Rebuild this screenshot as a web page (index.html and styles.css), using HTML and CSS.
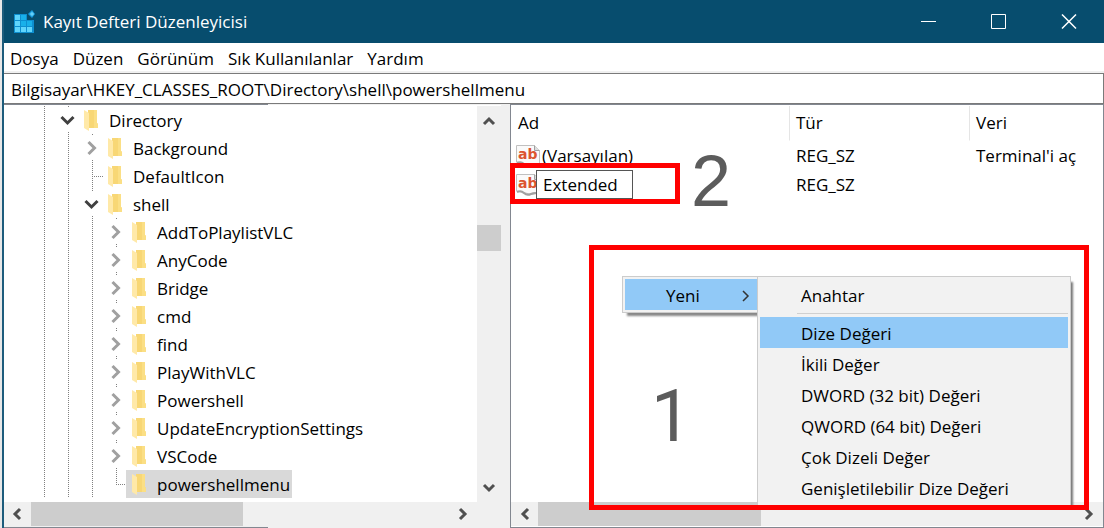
FILE: index.html
```html
<!DOCTYPE html>
<html lang="tr">
<head>
<meta charset="utf-8">
<title>Kayıt Defteri Düzenleyicisi</title>
<link rel="stylesheet" href="styles.css">
</head>
<body>
<svg class="defs" aria-hidden="true">
  <symbol id="folder" viewBox="0 0 14 22">
    <path d="M4 1h9v13l1 1v4H4z" fill="#f8d775"/>
    <path d="M10 1h3v13l1 1v4h-4z" fill="#fbdf85"/>
    <path d="M0 1l5 3v18l-5-3z" fill="#ffe9a8"/>
  </symbol>
  <symbol id="right" viewBox="0 0 24 28"><path d="M8.500 8l6 6-6 6" fill="none" stroke="#a0a0a0" stroke-width="3"/></symbol>
  <symbol id="down" viewBox="0 0 24 28"><path d="M5.500 11l6 6 6-6" fill="none" stroke="#404040" stroke-width="3"/></symbol>
  <symbol id="arrow" viewBox="0 0 24 24"><path d="M15 7l-5 5 5 5" fill="none" stroke="#505050" stroke-width="3"/></symbol>
  <symbol id="page" viewBox="0 0 24 24">
    <path d="M.5 1.500h18l5 5V21q-3-1-5 0t-5 0-5-1-4-1-4-1z" fill="#fafafa" stroke="#c0c0c0"/>
    <path d="M18.500 1.500v5h5" fill="#ddd" stroke="#a0a0a0"/>
    <path d="M1 19q4-2 7 1t7 1 9 0" fill="none" stroke="#a0a0a0" stroke-width="2"/>
  </symbol>
</svg>
<div class="window">
  <header class="titlebar">
    <svg class="app-icon" viewBox="0 0 24 24" aria-hidden="true">
      <path d="M1 4h13v6h7v13H1z" fill="#0d8fd0"/>
      <path d="M2 5h5v5H2zM2 11h5v5H2zM2 17h5v5H2zM8 17h5v5H8zM14 17h5v5h-5z" fill="#5fd4fb"/>
      <path d="M8 5h5v5H8zM8 11h5v5H8zM14 11h5v5h-5z" fill="#18b0ea"/>
      <path d="M19 0l3 4-3 4-4-4z" fill="#199ee0"/><path d="M19 2v4M17 4h4" stroke="#7edfff"/>
    </svg>
    <h1 class="title">Kayıt Defteri Düzenleyicisi</h1>
    <button class="control" aria-label="Simge durumuna küçült"><svg viewBox="0 0 16 16"><path d="M0 7.500h15"/></svg></button>
    <button class="control" aria-label="Ekranı kapla"><svg viewBox="0 0 16 16"><path d="M.5 .5h14v14H.5z"/></svg></button>
    <button class="control close" aria-label="Kapat"><svg viewBox="0 0 16 16"><path d="M1 .5l14 14M15 .5l-14 14"/></svg></button>
  </header>
  <nav class="menubar">
    <button>Dosya</button><button>Düzen</button><button>Görünüm</button><button>Sık Kullanılanlar</button><button>Yardım</button>
  </nav>
  <input class="address" aria-label="Adres" value="Bilgisayar\HKEY_CLASSES_ROOT\Directory\shell\powershellmenu">
  <main class="panes">
    <section class="tree-pane">
      <div class="tree-view">
        <ul class="tree">
          <li><i></i><i class="cut"><svg><use href="#down"/></svg></i><span><svg><use href="#folder"/></svg>Directory</span></li>
          <li><i></i><i></i><i class="cut"><svg><use href="#right"/></svg></i><span><svg><use href="#folder"/></svg>Background</span></li>
          <li><i></i><i></i><i class="branch"></i><span><svg><use href="#folder"/></svg>DefaultIcon</span></li>
          <li><i></i><i></i><i class="cut"><svg><use href="#down"/></svg></i><span><svg><use href="#folder"/></svg>shell</span></li>
          <li><i></i><i></i><i></i><i class="cut"><svg><use href="#right"/></svg></i><span><svg><use href="#folder"/></svg>AddToPlaylistVLC</span></li>
          <li><i></i><i></i><i></i><i class="cut"><svg><use href="#right"/></svg></i><span><svg><use href="#folder"/></svg>AnyCode</span></li>
          <li><i></i><i></i><i></i><i class="cut"><svg><use href="#right"/></svg></i><span><svg><use href="#folder"/></svg>Bridge</span></li>
          <li><i></i><i></i><i></i><i class="cut"><svg><use href="#right"/></svg></i><span><svg><use href="#folder"/></svg>cmd</span></li>
          <li><i></i><i></i><i></i><i class="cut"><svg><use href="#right"/></svg></i><span><svg><use href="#folder"/></svg>find</span></li>
          <li><i></i><i></i><i></i><i class="cut"><svg><use href="#right"/></svg></i><span><svg><use href="#folder"/></svg>PlayWithVLC</span></li>
          <li><i></i><i></i><i></i><i class="cut"><svg><use href="#right"/></svg></i><span><svg><use href="#folder"/></svg>Powershell</span></li>
          <li><i></i><i></i><i></i><i class="cut"><svg><use href="#right"/></svg></i><span><svg><use href="#folder"/></svg>UpdateEncryptionSettings</span></li>
          <li><i></i><i></i><i></i><i class="cut"><svg><use href="#right"/></svg></i><span><svg><use href="#folder"/></svg>VSCode</span></li>
          <li><i></i><i></i><i></i><i class="branch last"></i><span class="selected"><svg><use href="#folder"/></svg>powershellmenu</span></li>
        </ul>
        <div class="vscroll">
          <svg class="up"><use href="#arrow"/></svg>
          <b></b>
          <svg class="dn"><use href="#arrow"/></svg>
        </div>
      </div>
      <div class="hscroll">
        <svg><use href="#arrow"/></svg><b></b><svg class="rt"><use href="#arrow"/></svg>
      </div>
    </section>
    <section class="list-pane">
      <div class="list">
        <table>
          <colgroup><col class="c-name"><col class="c-type"><col></colgroup>
          <thead><tr><th>Ad</th><th>Tür</th><th>Veri</th></tr></thead>
          <tbody>
            <tr><td><div class="name"><svg viewBox="0 0 24 24"><use href="#page"/><text x="2" y="15" class="ab-text">ab</text></svg><span>(Varsayılan)</span></div></td><td>REG_SZ</td><td>Terminal'i aç</td></tr>
            <tr><td><div class="name"><svg viewBox="0 0 24 24"><use href="#page"/><text x="2" y="15" class="ab-text">ab</text></svg><input class="rename" aria-label="Değer adı" value="Extended"></div></td><td>REG_SZ</td><td></td></tr>
          </tbody>
        </table>
      </div>
      <div class="hscroll">
        <svg><use href="#arrow"/></svg><b></b><svg class="rt"><use href="#arrow"/></svg>
      </div>
      <div class="mark mark-name"></div>
      <div class="digit two">2</div>
      <div class="mark mark-menu">
        <div class="menu"><button class="active parent">Yeni<svg viewBox="0 0 8 12"><path d="M1 1l5 5-5 5"/></svg></button></div>
        <div class="submenu">
          <button>Anahtar</button>
          <hr>
          <button class="active">Dize Değeri</button>
          <button>İkili Değer</button>
          <button>DWORD (32 bit) Değeri</button>
          <button>QWORD (64 bit) Değeri</button>
          <button>Çok Dizeli Değer</button>
          <button>Genişletilebilir Dize Değeri</button>
        </div>
      </div>
      <div class="digit one">1</div>
    </section>
  </main>
</div>
</body>
</html>
```
FILE: styles.css
```css
* { box-sizing: border-box; }
body {
  margin: 0;
  background: #e8e8e8;
  color: #000;
  font: 17px/28px "Open Sans", "Noto Sans", sans-serif;
}
button, input { font: inherit; color: inherit; border: 0; margin: 0; padding: 0; background: none; border-radius: 0; outline: 0; }
svg { display: block; flex: none; }
.defs { position: absolute; width: 0; height: 0; }
.ab-text { font: bold 14px "DejaVu Sans", sans-serif; fill: #dc5430; }

.window {
  display: flex;
  flex-direction: column;
  height: 100vh;
  margin-left: 2px;
  border-left: 2px solid #1d5c7c;
  background: #f0f0f0;
  overflow: hidden;
}
.titlebar {
  display: flex;
  align-items: center;
  height: 43px;
  flex: none;
  background: #074d6e;
  color: #fff;
}
.app-icon { width: 24px; height: 24px; margin-left: 9px; }
.title { flex: 1; margin: 0 0 0 6px; font-size: 17px; font-weight: 400; }
.control { width: 70px; height: 42px; display: grid; place-items: center; }
.control svg { width: 16px; height: 16px; fill: none; stroke: #fff; }
.close svg { stroke-width: 1.500; }

.menubar {
  display: flex;
  flex: none;
  height: 28px;
  padding: 2px 0 0 6px;
  gap: 14px;
  background: #fff;
}
.address {
  flex: none;
  height: 31px;
  margin-top: 2px;
  padding: 2px 6px 0 7px;
  border: 1px solid #7a7a7a;
  border-left: 0;
  background: #fff;
}

.panes { display: flex; flex: 1; min-height: 0; }
.tree-pane {
  width: 506px;
  flex: none;
  display: flex;
  flex-direction: column;
  padding: 1px 9px 1px 0;
  background: linear-gradient(#828790, #828790) 0 0 / 264px 1px no-repeat,
    linear-gradient(#828790, #828790) 0 100% / 264px 1px no-repeat, #f0f0f0;
}
.tree-view { display: flex; flex: 1; min-height: 0; background: #fff; }
.tree { flex: 1; margin: 0; padding: 1px 0 0 28px; list-style: none; overflow: hidden; }
.tree li { display: flex; height: 28px; }
.tree i {
  width: 24px;
  flex: none;
  background: repeating-linear-gradient(#808080 0 1px, transparent 1px 2px) 12px 0 / 1px 100% no-repeat;
}
.tree i svg { width: 24px; height: 28px; }
.tree .cut {
  background: linear-gradient(#fff, #fff) 0 2px / 24px 24px no-repeat,
    repeating-linear-gradient(#808080 0 1px, transparent 1px 2px) 12px 0 / 1px 100% no-repeat;
}
.tree .branch {
  background: repeating-linear-gradient(#808080 0 1px, transparent 1px 2px) 12px 0 / 1px 100% no-repeat,
    repeating-linear-gradient(90deg, #808080 0 1px, transparent 1px 2px) 12px 14px / 12px 1px no-repeat;
}
.tree .last { background-size: 1px 14px, 12px 1px; }
.tree span {
  display: flex;
  gap: 11px;
  margin-left: -2px;
  padding: 0 2px 0 6px;
  line-height: 30px;
}
.tree span svg { width: 14px; height: 22px; margin-top: 3px; }
.tree .selected { background: #d9d9d9; }

.vscroll {
  width: 24px;
  display: grid;
  grid-template-rows: 93px 26px 1fr;
  margin-top: 1px;
  padding: 26px 0 2px;
  background: #f0f0f0;
}
.vscroll b, .hscroll b { background: #cdcdcd; }
.vscroll svg, .hscroll svg { width: 24px; height: 24px; }
.vscroll .up { margin-top: -23px; transform: rotate(90deg); }
.vscroll .dn { align-self: end; transform: rotate(-90deg); }
.hscroll {
  display: flex;
  flex: none;
  height: 24px;
  margin-bottom: 1px;
  background: #f0f0f0;
}
.tree-pane .hscroll { padding: 0 26px 0 1px; }
.tree-pane .hscroll b { width: 45%; margin-left: 2px; }
.hscroll .rt { margin-left: auto; transform: rotate(180deg); }
.list-pane .hscroll { padding: 0 2px; }
.list-pane .hscroll b { width: 38%; margin-left: 1px; }

.list-pane {
  position: relative;
  flex: 1;
  min-width: 0;
  display: flex;
  flex-direction: column;
  border: 1px solid #828790;
  background: #fff;
}
.list { flex: 1; min-height: 0; padding-top: 1px; }
table { width: 100%; table-layout: fixed; border-collapse: separate; border-spacing: 0; }
.c-name { width: 279px; }
.c-type { width: 180px; }
th, td { padding: 0 6px; height: 29px; text-align: left; font-weight: 400; white-space: nowrap; }
th { height: 35px; border-right: 1px solid #e5e5e5; border-bottom: 1px solid #fff; }
th:first-child { padding-left: 7px; }
th:last-child { border-right: 0; }
td:first-child { padding-left: 5px; }
.name { display: flex; align-items: center; height: 29px; gap: 2px; }
.name svg { width: 24px; height: 24px; }
.rename {
  width: 97px;
  height: 29px;
  margin-left: -6px;
  padding-left: 6px;
  border: 1px solid #555;
  background: #fff;
}

/* Callouts drawn over the list */
.mark { position: absolute; border: 5px solid #f00; }
.mark-name { left: -1px; top: 58px; width: 170px; height: 41px; }
.mark-menu {
  left: 78px;
  top: 140px;
  width: 500px;
  display: flex;
  align-items: flex-start;
  padding: 26px 13px 0 28px;
}
.digit { position: absolute; color: #5c5c5c; font: 72px/72px Roboto, sans-serif; }
.two { left: 180px; top: 40px; font-family: "Liberation Sans", Arial, sans-serif; }
.one { left: 140px; top: 276px; }

.menu, .submenu { border: 1px solid #ccc; background: #f2f2f2; padding: 2px; }
.menu { width: 135px; border-right: 0; padding-right: 0; box-shadow: 4px 4px 2px -1px #888; }
.submenu { flex: 1; border-bottom: 0; box-shadow: 4px 4px 2px -2px #777; clip-path: inset(0 -6px 0 0); }
.menu button, .submenu button {
  display: block;
  width: 100%;
  height: 31px;
  padding: 2px 0 0 41px;
  text-align: left;
  line-height: 29px;
}
.menu .active, .submenu .active { background: #91c9f7; }
.menu .parent { display: flex; align-items: center; justify-content: space-between; padding-right: 7px; }
.parent svg { width: 8px; height: 12px; fill: none; stroke: #333; stroke-width: 1.500; }
.submenu hr { height: 1px; margin: 3px 0 3px 37px; border: 0; background: #d0d0d0; }
```
